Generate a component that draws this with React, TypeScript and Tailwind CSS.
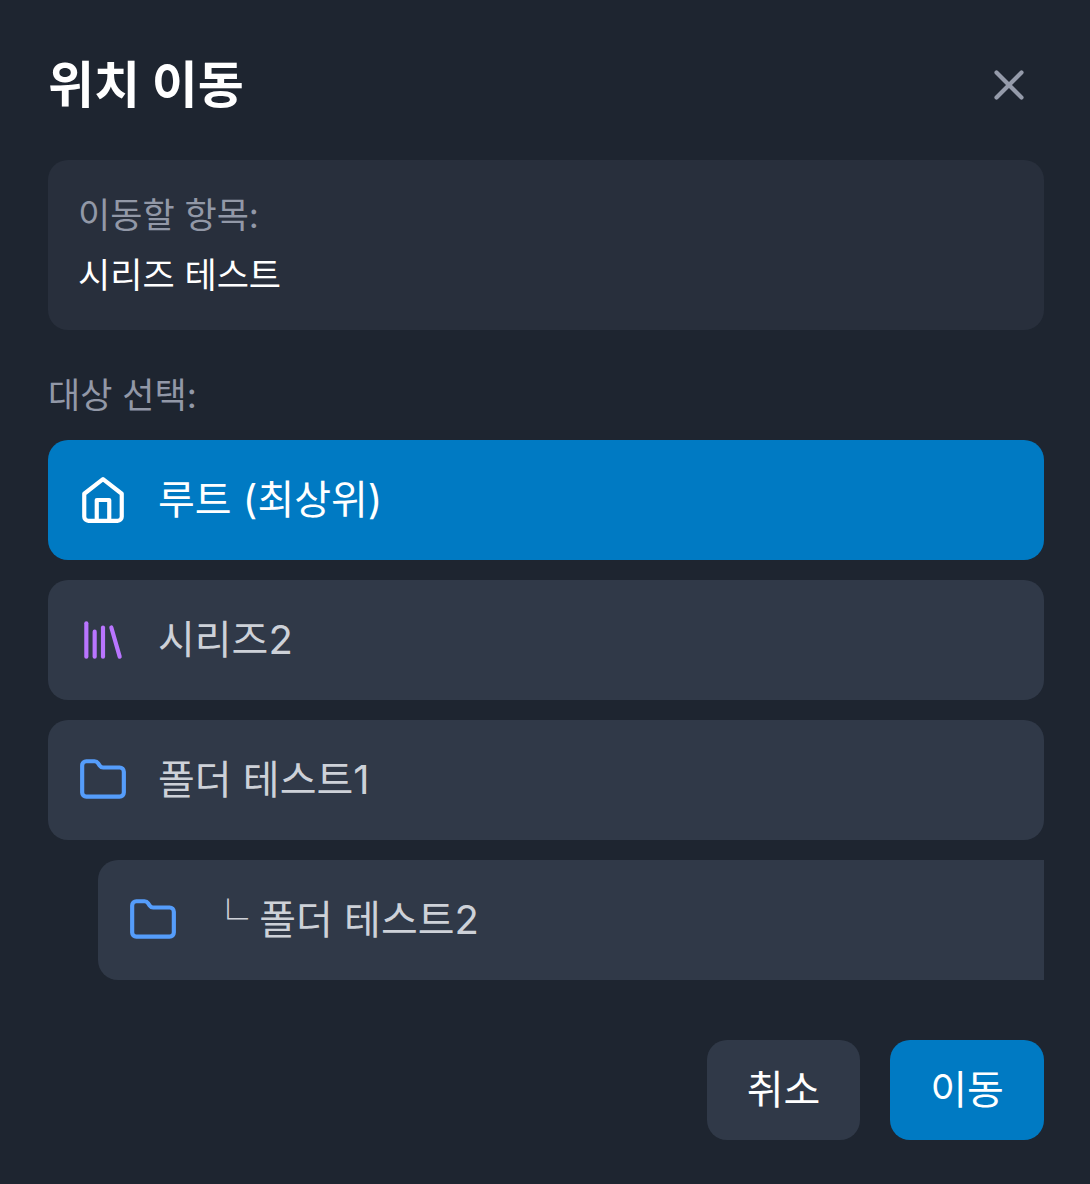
import { useState } from "react"
import { Folder, X } from "lucide-react"
import clsx from "clsx"

type Target = {
  id: string
  name: string
  kind: "root" | "series" | "folder"
  depth: number
}

const targets: Target[] = [
  { id: "root", name: "루트 (최상위)", kind: "root", depth: 0 },
  { id: "series-2", name: "시리즈2", kind: "series", depth: 0 },
  { id: "folder-1", name: "폴더 테스트1", kind: "folder", depth: 0 },
  { id: "folder-2", name: "폴더 테스트2", kind: "folder", depth: 1 },
]

const HomeIcon = () => (
  <svg viewBox="0 0 24 24" className="size-[50px]" fill="none" stroke="currentColor" strokeWidth="2" strokeLinecap="round" strokeLinejoin="round">
    <path d="m3 9 9-7 9 7v11a2 2 0 0 1-2 2H5a2 2 0 0 1-2-2z" />
    <polyline points="9 22 9 12 15 12 15 22" />
  </svg>
)

const LibraryIcon = () => (
  <svg viewBox="0 0 24 24" className="size-[50px] text-[#b975ff]" fill="none" stroke="currentColor" strokeWidth="2" strokeLinecap="round">
    <path d="m16 6 4 14" />
    <path d="M12 6v14" />
    <path d="M8 8v12" />
    <path d="M4 4v16" />
  </svg>
)

const TargetIcon = ({ kind }: { kind: Target["kind"] }) => {
  if (kind === "root") return <HomeIcon />
  if (kind === "series") return <LibraryIcon />
  return <Folder className="size-[50px] text-[#559dfb]" />
}

export default function App() {
  const [selected, setSelected] = useState("root")

  return (
    <div className="h-[1184px] w-[1090px] overflow-hidden bg-[#1e2530] pt-[45px] pr-[46px] pl-12 font-[Inter,'Noto_Sans_CJK_KR',sans-serif] text-white">
      <div className="flex h-20 items-center justify-between">
        <h2 className="text-[50px] leading-[70px] font-bold">위치 이동</h2>
        <button className="p-2.5 text-[#959baa]" aria-label="닫기">
          <X className="size-[50px]" />
        </button>
      </div>

      <div className="mt-[35px] h-[170px] rounded-[20px] bg-[#282f3c] px-[30px] pt-[30px] text-[35px] leading-[50px]">
        <p className="text-[#9298a7]">이동할 항목:</p>
        <p className="mt-2.5">시리즈 테스트</p>
      </div>

      <p className="mt-10 text-[35px] leading-[50px] text-[#9298a7]">대상 선택:</p>

      {/* Nested rows run under the right edge of the list */}
      <div className="mt-5 flex flex-col gap-5 overflow-hidden">
        {targets.map((target) => (
          <button
            key={target.id}
            onClick={() => setSelected(target.id)}
            className={clsx(
              "flex h-[120px] shrink-0 items-center gap-[30px] px-[30px] text-left text-[40px] leading-[60px]",
              target.depth > 0 ? "ml-[50px] rounded-l-[20px]" : "rounded-[20px]",
              selected === target.id ? "bg-[#007ac3]" : "bg-[#303948] text-[#cdd1d8]"
            )}
          >
            <TargetIcon kind={target.kind} />
            <span className="whitespace-pre">
              {target.depth > 0 && "└ "}
              {target.name}
            </span>
          </button>
        ))}
      </div>

      <div className="mt-[60px] flex justify-end gap-[30px] text-[40px] leading-[60px]">
        <button className="h-[100px] w-[153px] rounded-[20px] bg-[#303948]">취소</button>
        <button className="h-[100px] w-[154px] rounded-[20px] bg-[#007ac3]">이동</button>
      </div>
    </div>
  )
}
